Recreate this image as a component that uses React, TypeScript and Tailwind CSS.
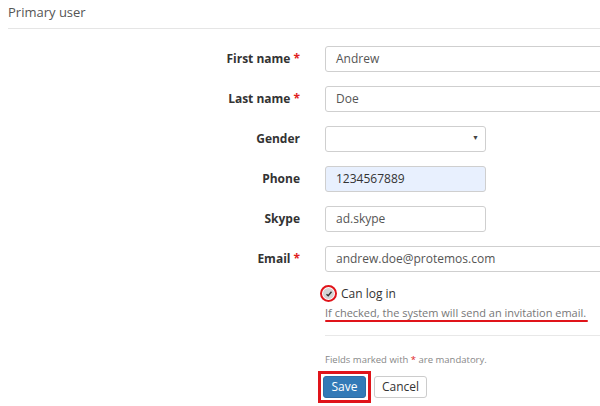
import React from 'react';

const font = { fontFamily: '"Open Sans", "Noto Sans", sans-serif' };

function Row({ label, required, children }: { label: string; required?: boolean; children: React.ReactNode }) {
  return (
    <div className="flex items-center h-[26px] mb-[14px]">
      <div className="w-[300px] shrink-0 text-right text-[12px] font-bold text-[#333]">
        {label}
        {required && <span className="text-[#e02020] ml-[3px]">*</span>}
      </div>
      <div className="ml-[25px] shrink-0 h-full">{children}</div>
    </div>
  );
}

function Input({ value, wide, filled }: { value: string; wide?: boolean; filled?: boolean }) {
  return (
    <div
      className={`h-full border border-[#cfcfcf] rounded-[3px] px-[10px] flex items-center text-[12px] ${
        filled ? 'bg-[#e8f0fe] text-[#333]' : 'bg-white text-[#555]'
      } ${wide ? 'w-[290px]' : 'w-[161px]'}`}
    >
      {value}
    </div>
  );
}

export default function App() {
  return (
    <div className="w-[600px] h-[406px] bg-white overflow-hidden" style={font}>
      <div className="pl-2">
        <div className="pt-[3px] pb-[5px] text-[13px] text-[#555] border-b border-[#e5e5e5]">Primary user</div>
      </div>

      <div className="pt-[17px]">
        <Row label="First name" required>
          <Input value="Andrew" wide />
        </Row>
        <Row label="Last name" required>
          <Input value="Doe" wide />
        </Row>
        <Row label="Gender">
          <div className="h-full w-[161px] border border-[#cfcfcf] rounded-[3px] bg-white flex items-center justify-end pr-[6px]">
            <span className="text-[7px] text-[#444]">▼</span>
          </div>
        </Row>
        <Row label="Phone">
          <Input value="1234567889" filled />
        </Row>
        <Row label="Skype">
          <Input value="ad.skype" />
        </Row>
        <Row label="Email" required>
          <Input value="andrew.doe@protemos.com" wide />
        </Row>

        <div className="ml-[320px] -mt-[1px]">
          <div className="flex items-center h-[18px]">
            <div className="w-[17px] h-[17px] rounded-full border-2 border-[#e0141a] flex items-center justify-center">
              <div className="w-[11px] h-[11px] rounded-full bg-[#d4d4d4] flex items-center justify-center">
                <svg width="8" height="8" viewBox="0 0 8 8">
                  <path d="M1.5 4.2 L3.2 5.8 L6.5 1.8" stroke="#333" strokeWidth="1.4" fill="none" />
                </svg>
              </div>
            </div>
            <span className="ml-[4px] text-[12px] text-[#333]">Can log in</span>
          </div>
          <div className="ml-[5px] mt-[2px] text-[11px] text-[#777] leading-[16px] w-fit">
            If checked, the system will send an invitation email.
            <div className="h-[2px] bg-[#e0141a] rounded-full -mt-[1px] mr-[-2px]" />
          </div>
          <div className="ml-[5px] mt-[13px] border-t border-[#e8e8e8]" />
          <div className="ml-[5px] mt-[17px] text-[9.5px] text-[#888] leading-[14px]">
            Fields marked with <span className="text-[#e02020]">*</span> are mandatory.
          </div>
          <div className="-ml-[2px] mt-[4px] flex items-center gap-[3px]">
            <div className="border-[3px] border-[#e0141a] p-[2px]">
              <button className="h-[22px] w-[43px] rounded-[3px] bg-[#337ab7] border border-[#2e6da4] text-white text-[12px] block">
                Save
              </button>
            </div>
            <button className="h-[22px] w-[53px] rounded-[3px] bg-white border border-[#ccc] text-[#333] text-[12px]">
              Cancel
            </button>
          </div>
        </div>
      </div>
    </div>
  );
}
